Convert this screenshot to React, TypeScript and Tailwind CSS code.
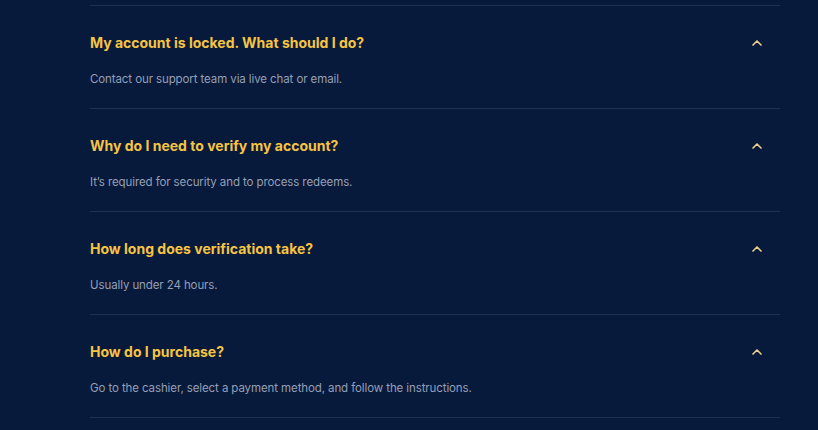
import { ChevronUp } from 'lucide-react';

const faqs = [
  { q: 'My account is locked. What should I do?', a: 'Contact our support team via live chat or email.' },
  { q: 'Why do I need to verify my account?', a: 'It’s required for security and to process redeems.' },
  { q: 'How long does verification take?', a: 'Usually under 24 hours.' },
  { q: 'How do I purchase?', a: 'Go to the cashier, select a payment method, and follow the instructions.' },
];

const App = () => {
  return (
    <div className="min-h-screen bg-[#071a3b] font-['Inter','Noto_Sans',sans-serif]">
      <div className="mx-[90px] w-[690px] pt-[5px]">
        {faqs.map(item => (
          <div key={item.q} className="border-t border-[#1f3152]">
            <button className="w-full flex items-center justify-between pt-[26px] pr-[15px] text-left">
              <span className="text-[14px] leading-[22px] font-bold text-[#f6c443]">{item.q}</span>
              <ChevronUp size={16} strokeWidth={2.5} className="text-[#ead08a]" />
            </button>
            <p className="mt-[15px] pb-[19px] text-[11.5px] tracking-[-0.1px] leading-[20px] text-[#969fb5]">{item.a}</p>
          </div>
        ))}
        <div className="border-t border-[#1f3152]" />
      </div>
    </div>
  );
};

export default App;
